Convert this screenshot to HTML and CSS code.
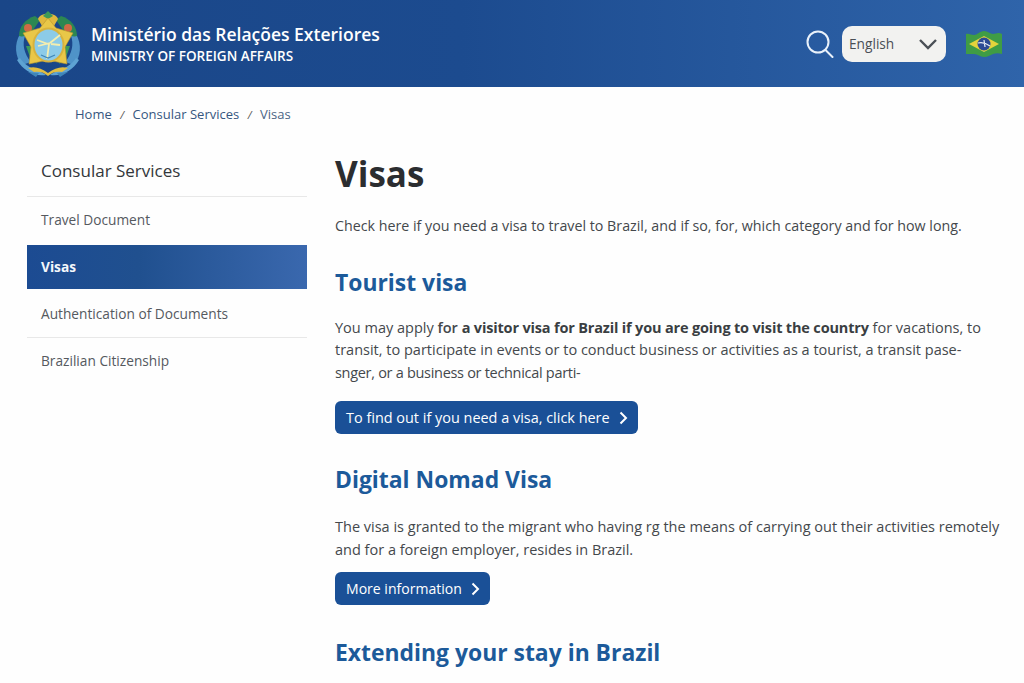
FILE: index.html
```html
<!DOCTYPE html>
<html lang="en">
<head>
  <meta charset="UTF-8">
  <title>Visas - Ministry of Foreign Affairs</title>
  <link rel="stylesheet" href="styles.css">
</head>
<body>
  <header class="top-bar">
    <div class="brand">
      <svg class="emblem" width="68" height="70" viewBox="0 0 68 70">
        <!-- blue branches, sides and bottom -->
        <path d="M6 24C0 34 1 47 8 55l9-3C10 44 8 34 11 26z" fill="#4f93c8"/>
        <path d="M62 24c6 10 5 23-2 31l-9-3c7-8 9-18 6-26z" fill="#4f93c8"/>
        <path d="M3 50c6 10 17 17 29 15-3-2-6-4-9-5-7-2-13-6-17-12zM65 50c-6 10-17 17-29 15 3-2 6-4 9-5 7-2 13-6 17-12z" fill="#5ea3d3"/>
        <path d="M14 62l8 5 3-4zM54 62l-8 5-3-4z" fill="#3f85b8"/>
        <!-- green leaves, top -->
        <path d="M21 6C11 9 5 17 5 26c3 1 8 0 12-3l9-13z" fill="#2c8752"/>
        <path d="M47 6c10 3 16 11 16 20-3 1-8 0-12-3l-9-13z" fill="#2c8752"/>
        <path d="M12 36l5 14 6 4-6-18zM56 36l-5 14-6 4 6-18z" fill="#3b9a5a"/>
        <circle cx="14" cy="18" r="4" fill="#cf6a45"/>
        <circle cx="54" cy="18" r="4" fill="#cf6a45"/>
        <!-- crest -->
        <path d="M24 9c2-7 18-7 20 0l-4 7H28z" fill="#e0b83e"/>
        <path d="M29 6l5-5 5 5-5 3z" fill="#3f9a58"/>
        <!-- star and ribbon -->
        <path d="M34 8l8 10 17 5-8 14 2 17-19-4-19 4 2-17-8-14 17-5z" fill="#e9c748" stroke="#b9962c" stroke-width=".6"/>
        <path d="M14 58c7-2 13 0 20 5 7-5 13-7 20-5l-6 4c-5-1-10 0-14 4-4-4-9-5-14-4z" fill="#e0bd42"/>
        <!-- shield -->
        <ellipse cx="34.500" cy="35" rx="16" ry="17.500" fill="#d8b23c"/>
        <ellipse cx="34.500" cy="35" rx="14" ry="15.500" fill="#8ccbe8"/>
        <path d="M23 30l11 4M24 36l12-3M36 33l10-8M37 34l9 1M35 34l-2 15" stroke="#f4eeb0" stroke-width="1.800" fill="none"/>
        <path d="M27 45l7 3 7-3" stroke="#3f86b8" stroke-width="1.200" fill="none"/>
      </svg>
      <div class="brand-text">
        <div class="brand-pt">Ministério das Relações Exteriores</div>
        <div class="brand-en">MINISTRY OF FOREIGN AFFAIRS</div>
      </div>
    </div>
    <div class="top-tools">
      <svg class="search-icon" width="28" height="28" viewBox="0 0 28 28" fill="none" stroke="#e9f1fa" stroke-width="2">
        <circle cx="12" cy="12" r="10.500"/>
        <path d="M19.500 20l7 7" stroke-linecap="round"/>
      </svg>
      <div class="lang-select">
        <span>English</span>
        <svg width="20" height="12" viewBox="0 0 20 12" fill="none" stroke="#4a4f55" stroke-width="2.400">
          <path d="M2 2l8 8 8-8"/>
        </svg>
      </div>
      <svg class="flag" width="36" height="26" viewBox="0 0 36 26">
        <path d="M0 3c3-1 5 1 8 1s6-4 10-4 6 3 9 3 5-2 9 0v20c-3-1-6-1-9 0s-5 3-9 3-6-3-10-3-6 0-8 0z" fill="#3f9c45"/>
        <path d="M3 13l15-8 15 8-15 8z" fill="#e4d33b"/>
        <circle cx="18" cy="13" r="6.500" fill="#2b4a94"/>
        <path d="M12 12c4-1 8 0 12 3M18 9l1 7" stroke="#e8eef5" stroke-width="1.200" fill="none"/>
      </svg>
    </div>
  </header>

  <nav class="breadcrumb">
    <a href="#">Home</a><i>/</i><a href="#">Consular Services</a><i>/</i><span>Visas</span>
  </nav>

  <div class="page">
    <aside class="side-menu">
      <h3>Consular Services</h3>
      <ul>
        <li><a href="#">Travel Document</a></li>
        <li class="active"><a href="#">Visas</a></li>
        <li><a href="#">Authentication of Documents</a></li>
        <li><a href="#">Brazilian Citizenship</a></li>
      </ul>
    </aside>

    <main class="content">
      <h1>Visas</h1>
      <p class="intro">Check here if you need a visa to travel to Brazil, and if so, for, which category and for how long.</p>

      <h2>Tourist visa</h2>
      <p>You may apply <b class="soft">for</b> <strong>a visitor visa for Brazil if you are going to visit the country</strong> for vacations, to<br>
      transit, to participate in events or to conduct business or activities as a tourist, a transit pase-<br>
      <span class="tight">snger, or a business or technical parti-</span></p>
      <a class="btn" href="#">To find out if you need a visa, click here
        <svg width="9" height="14" viewBox="0 0 9 14" fill="none" stroke="#fff" stroke-width="2"><path d="M1.500 1.500L7 7l-5.500 5.500"/></svg>
      </a>

      <h2>Digital Nomad Visa</h2>
      <p>The visa is granted to the migrant who having rg the means of carrying out their activities remotely<br>
      and for a foreign employer, resides in Brazil.</p>
      <a class="btn btn-small" href="#">More information
        <svg width="9" height="14" viewBox="0 0 9 14" fill="none" stroke="#fff" stroke-width="2"><path d="M1.500 1.500L7 7l-5.500 5.500"/></svg>
      </a>

      <h2>Extending your stay in Brazil</h2>
    </main>
  </div>
</body>
</html>
```

FILE: styles.css
```css
* {
  margin: 0;
  padding: 0;
  box-sizing: border-box;
}

html, body {
  height: 683px;
  overflow: hidden;
}

body {
  background: #fefefe;
  color: #44484c;
  font-family: "Open Sans", "Noto Sans", sans-serif;
  font-size: 14.500px;
}

a {
  text-decoration: none;
  color: inherit;
}

/* Header */
.top-bar {
  height: 87px;
  display: flex;
  justify-content: space-between;
  align-items: center;
  padding: 0 22px 0 14px;
  background: linear-gradient(90deg, #1a4688 0%, #1c4b8f 45%, #2f64aa 100%);
}

.brand {
  display: flex;
  align-items: center;
  gap: 9px;
}

.emblem {
  margin-top: 2px;
}

.brand-text {
  color: #fff;
}

.brand-pt {
  font-size: 17.500px;
  font-weight: 600;
  line-height: 24px;
}

.brand-en {
  font-size: 13.500px;
  font-weight: 600;
  line-height: 20px;
}

.top-tools {
  display: flex;
  align-items: center;
}

.search-icon {
  margin-right: 8px;
}

.lang-select {
  width: 104px;
  height: 36px;
  display: flex;
  justify-content: space-between;
  align-items: center;
  padding: 0 8px 0 7px;
  border-radius: 10px;
  background: #f2f2f0;
  color: #4a4f55;
  font-size: 13.700px;
}

.flag {
  margin-left: 20px;
}

/* Breadcrumb */
.breadcrumb {
  padding: 18px 0 0 75px;
  height: 54px;
  font-size: 13px;
  color: #4a6484;
}

.breadcrumb a {
  color: #36567f;
}

.breadcrumb i {
  margin: 0 8.500px;
  font-size: 11px;
  color: #555;
}

/* Page columns */
.page {
  display: grid;
  grid-template-columns: 280px 1fr;
  column-gap: 28px;
  padding-left: 27px;
}

/* Side menu */
.side-menu h3 {
  padding: 17px 14px 0;
  height: 56px;
  font-size: 17px;
  font-weight: 400;
  line-height: 26px;
  color: #33373b;
  border-bottom: 1px solid #e8e8e8;
}

.side-menu ul {
  list-style: none;
}

.side-menu li {
  height: 48px;
  padding-left: 14px;
  line-height: 46px;
  font-size: 13.700px;
  color: #55595e;
}

.side-menu li:nth-child(3) {
  height: 49px;
  line-height: 50px;
  border-bottom: 1px solid #e8e8e8;
}

.side-menu li.active {
  height: 44px;
  line-height: 43px;
  font-weight: 700;
  color: #f4f7fb;
  background: linear-gradient(90deg, #1c4b92 0%, #20508f 40%, #3a68ae 100%);
}

/* Main content */
.content h1 {
  padding-top: 9px;
  font-size: 35px;
  font-weight: 700;
  line-height: 48px;
  color: #2b2d30;
}

.content p {
  line-height: 22.500px;
  white-space: nowrap;
}

.content strong {
  font-weight: 700;
  letter-spacing: -0.170px;
  color: #3a3e42;
}

.soft {
  font-weight: 600;
}

.tight {
  letter-spacing: -0.300px;
}

.intro {
  margin-top: 17px;
  font-size: 14.250px;
}

.content h2 {
  margin-top: 29px;
  font-size: 22.900px;
  font-weight: 700;
  line-height: 32px;
  color: #1c5a9a;
}

.content h2 + p {
  margin-top: 18px;
}

.content .btn + h2 {
  margin-top: 30px;
}

.content .btn + h2 + p {
  margin-top: 20px;
}

.content .btn-small + h2 {
  margin-top: 32px;
}

.btn {
  display: inline-flex;
  align-items: center;
  gap: 9px;
  height: 33px;
  margin-top: 17px;
  padding: 0 10px 0 11px;
  border-radius: 6px;
  background: #1a5097;
  color: #fff;
  font-size: 14.450px;
}

.btn-small {
  margin-top: 11px;
  font-size: 14.050px;
}
```
